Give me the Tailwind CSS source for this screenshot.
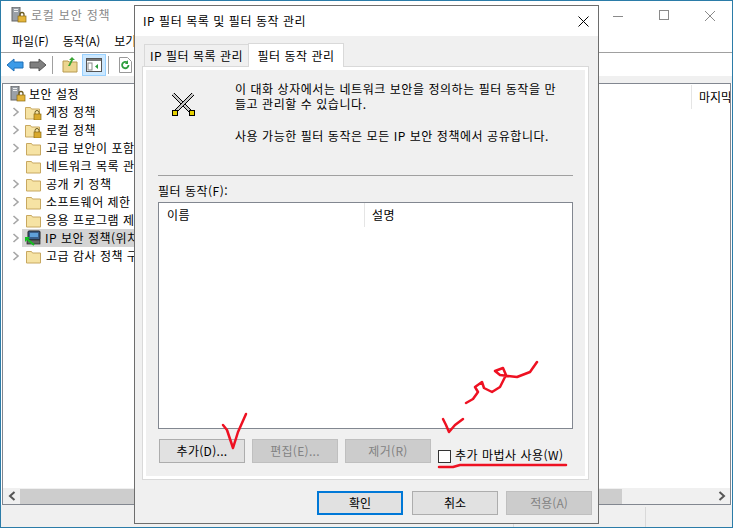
<!DOCTYPE html>
<html lang="ko">
<head>
<meta charset="UTF-8">
<title>로컬 보안 정책</title>
<script src="https://cdn.jsdelivr.net/npm/@tailwindcss/browser@4"></script>
</head>
<body class="bg-white">
<div class="relative w-[733px] h-[528px] overflow-hidden border border-[#2b7ca8] bg-white text-[12px] leading-[16px] text-black font-['Noto_Sans_CJK_KR','Noto_Sans',sans-serif] flex flex-col">

  <!-- main window -->
  <div class="h-[28px] flex items-center pl-[10px] shrink-0">
    <svg width="16" height="16" viewBox="0 0 16 16"><rect x="1" y="0" width="8" height="14" fill="#9aa0a8" stroke="#666"/><rect x="3" y="2" width="4" height="1" fill="#eee"/><rect x="3" y="4" width="4" height="1" fill="#eee"/><path d="M9 9V7.5a2 2 0 0 1 4 0V9" fill="none" stroke="#6b5a20" stroke-width="1.3"/><rect x="7" y="9" width="8" height="6" fill="#e5b53a" stroke="#8a6a14" stroke-width=".7"/></svg>
    <span class="ml-[4px] text-[#8a8a8a] tracking-[0.8px]">로컬 보안 정책</span>
  </div>
  <div class="h-[24px] flex items-center pl-[11px] gap-[14px] shrink-0 border-b border-[#a0a0a0]">
    <span>파일(F)</span><span>동작(A)</span><span>보기(V)</span>
  </div>
  <div class="h-[23px] flex items-center pl-[5px] shrink-0">
    <svg width="18" height="14" viewBox="0 0 18 14"><path d="M1 7 8 1v3h9v6H8v3z" fill="#3c9be8" stroke="#1c6fb8"/></svg>
    <svg class="ml-[5px]" width="18" height="14" viewBox="0 0 18 14"><path d="M17 7 10 1v3H1v6h9v3z" fill="#808080" stroke="#555"/></svg>
    <div class="w-px h-[18px] bg-[#a0a0a0] ml-[5px]"></div>
    <svg class="ml-[9px]" width="16" height="17" viewBox="0 0 16 17"><path d="M1 5h5l1 1h8v10H1z" fill="#ecd590" stroke="#b89a50"/><path d="M6 10 9 4H7l3-3 3 3h-2l-3 6z" fill="#3aa535"/></svg>
    <div class="ml-[4px] w-[24px] h-[22px] bg-[#cce8ff] border border-[#99d1ff] flex items-center justify-center">
      <svg width="16" height="14" viewBox="0 0 16 14"><rect x=".5" y=".5" width="15" height="13" fill="#fff" stroke="#555"/><rect x="1" y="1" width="14" height="2" fill="#777"/><rect x="2" y="5" width="4" height="7" fill="none" stroke="#888"/><path d="M12 6v5L9 8.500z" fill="#2a9a3a"/></svg>
    </div>
    <div class="w-px h-[18px] bg-[#a0a0a0] ml-[2px]"></div>
    <svg class="ml-[10px]" width="13" height="16" viewBox="0 0 13 16"><path d="M.5.500h8l4 4v11H.5z" fill="#fff" stroke="#999"/><path d="M9.500 8a3.200 3.200 0 1 1-1-2.300" fill="none" stroke="#2e9e3e" stroke-width="1.800"/><path d="M9 3v4H6z" fill="#2e9e3e"/></svg>
  </div>
  <div class="h-[7px] bg-[#f0f0f0] shrink-0"></div>

  <div class="flex-1 min-h-0 flex flex-col border-t border-l border-r border-[#828790] mx-px border-b-0">
    <div class="flex-1 min-h-0 flex">
      <div class="w-[688px] pt-[1px] shrink-0 overflow-hidden">
        <div class="h-[18px] flex items-center pl-[7px]">
          <svg width="16" height="16" viewBox="0 0 16 16"><rect x="1" y="0" width="8" height="14" fill="#9aa0a8" stroke="#666"/><rect x="3" y="2" width="4" height="1" fill="#eee"/><rect x="3" y="4" width="4" height="1" fill="#eee"/><path d="M9 9V7.500a2 2 0 0 1 4 0V9" fill="none" stroke="#6b5a20" stroke-width="1.300"/><rect x="7" y="9" width="8" height="6" fill="#e5b53a" stroke="#8a6a14" stroke-width=".7"/></svg>
          <span class="ml-[3px] tracking-[0.5px]">보안 설정</span>
        </div>
        <div class="h-[18px] flex items-center pl-[9px]">
          <svg width="8" height="10" viewBox="0 0 8 10"><path d="M1.500 1 6 5 1.500 9" fill="none" stroke="#a6a6a6" stroke-width="1.600"/></svg>
          <svg class="ml-[5px]" width="17" height="15" viewBox="0 0 17 15"><path d="M.5 2.500h5l1 1.500h8v10H.5z" fill="#f6e3a4" stroke="#c8a860"/><path d="M10 9V7.500a2 2 0 0 1 4 0V9" fill="none" stroke="#6b5a20"/><rect x="9" y="9" width="7" height="6" fill="#d9a92c" stroke="#8a6a14" stroke-width=".7"/></svg>
          <span class="ml-[4px] tracking-[0.5px]">계정 정책</span>
        </div>
        <div class="h-[18px] flex items-center pl-[9px]">
          <svg width="8" height="10" viewBox="0 0 8 10"><path d="M1.500 1 6 5 1.500 9" fill="none" stroke="#a6a6a6" stroke-width="1.600"/></svg>
          <svg class="ml-[5px]" width="17" height="15" viewBox="0 0 17 15"><path d="M.5 2.500h5l1 1.500h8v10H.5z" fill="#f6e3a4" stroke="#c8a860"/><path d="M10 9V7.500a2 2 0 0 1 4 0V9" fill="none" stroke="#6b5a20"/><rect x="9" y="9" width="7" height="6" fill="#d9a92c" stroke="#8a6a14" stroke-width=".7"/></svg>
          <span class="ml-[4px] tracking-[0.5px]">로컬 정책</span>
        </div>
        <div class="h-[18px] flex items-center pl-[9px]">
          <svg width="8" height="10" viewBox="0 0 8 10"><path d="M1.500 1 6 5 1.500 9" fill="none" stroke="#a6a6a6" stroke-width="1.600"/></svg>
          <svg class="ml-[5px]" width="17" height="15" viewBox="0 0 17 15"><path d="M1.500 2.500h5l1 1.500h8v10h-14z" fill="#f6e3a4" stroke="#c8a860"/></svg>
          <span class="ml-[4px] tracking-[0.5px] whitespace-nowrap">고급 보안이 포함된 Windows</span>
        </div>
        <div class="h-[18px] flex items-center pl-[22px]">
          <svg width="17" height="15" viewBox="0 0 17 15"><path d="M1.500 2.500h5l1 1.500h8v10h-14z" fill="#f6e3a4" stroke="#c8a860"/></svg>
          <span class="ml-[4px] tracking-[0.5px] whitespace-nowrap">네트워크 목록 관리자 정책</span>
        </div>
        <div class="h-[18px] flex items-center pl-[9px]">
          <svg width="8" height="10" viewBox="0 0 8 10"><path d="M1.500 1 6 5 1.500 9" fill="none" stroke="#a6a6a6" stroke-width="1.600"/></svg>
          <svg class="ml-[5px]" width="17" height="15" viewBox="0 0 17 15"><path d="M1.500 2.500h5l1 1.500h8v10h-14z" fill="#f6e3a4" stroke="#c8a860"/></svg>
          <span class="ml-[4px] tracking-[0.5px]">공개 키 정책</span>
        </div>
        <div class="h-[18px] flex items-center pl-[9px]">
          <svg width="8" height="10" viewBox="0 0 8 10"><path d="M1.500 1 6 5 1.500 9" fill="none" stroke="#a6a6a6" stroke-width="1.600"/></svg>
          <svg class="ml-[5px]" width="17" height="15" viewBox="0 0 17 15"><path d="M1.500 2.500h5l1 1.500h8v10h-14z" fill="#f6e3a4" stroke="#c8a860"/></svg>
          <span class="ml-[4px] tracking-[0.5px] whitespace-nowrap">소프트웨어 제한 정책</span>
        </div>
        <div class="h-[18px] flex items-center pl-[9px]">
          <svg width="8" height="10" viewBox="0 0 8 10"><path d="M1.500 1 6 5 1.500 9" fill="none" stroke="#a6a6a6" stroke-width="1.600"/></svg>
          <svg class="ml-[5px]" width="17" height="15" viewBox="0 0 17 15"><path d="M1.500 2.500h5l1 1.500h8v10h-14z" fill="#f6e3a4" stroke="#c8a860"/></svg>
          <span class="ml-[4px] tracking-[0.5px] whitespace-nowrap">응용 프로그램 제어 정책</span>
        </div>
        <div class="h-[18px] flex items-center pl-[9px]">
          <svg width="8" height="10" viewBox="0 0 8 10"><path d="M1.500 1 6 5 1.500 9" fill="none" stroke="#a6a6a6" stroke-width="1.600"/></svg>
          <div class="ml-[2px] w-[200px] h-[18px] bg-[#d4d4d4] flex items-center pl-[2px]">
            <svg width="17" height="16" viewBox="0 0 17 16"><rect x="4" y="1" width="12" height="9" rx="1" fill="#3a5f8a" stroke="#222"/><rect x="6" y="3" width="8" height="4" fill="#5fa0d8"/><rect x="3" y="10" width="13" height="4" fill="#666" stroke="#222" stroke-width=".7"/><path d="M2 8l8 7" stroke="#12c020" stroke-width="2"/><path d="M1 7v5l5-5z" fill="#12c020"/></svg>
            <span class="ml-[4px] tracking-[0.5px] whitespace-nowrap">IP 보안 정책(위치: 로컬 컴퓨터)</span>
          </div>
        </div>
        <div class="h-[18px] flex items-center pl-[9px]">
          <svg width="8" height="10" viewBox="0 0 8 10"><path d="M1.500 1 6 5 1.500 9" fill="none" stroke="#a6a6a6" stroke-width="1.600"/></svg>
          <svg class="ml-[5px]" width="17" height="15" viewBox="0 0 17 15"><path d="M1.500 2.500h5l1 1.500h8v10h-14z" fill="#f6e3a4" stroke="#c8a860"/></svg>
          <span class="ml-[4px] tracking-[0.5px] whitespace-nowrap">고급 감사 정책 구성</span>
        </div>
      </div>
      <div class="flex-1 min-w-0 h-[24px] mt-[1px] border-l border-[#e5e5e5] pl-[7px] flex items-center overflow-hidden whitespace-nowrap">마지막</div>
    </div>
    <!-- horizontal scrollbar -->
    <div class="h-[16px] shrink-0 bg-[#f0f0f0] flex items-center">
      <div class="w-[17px] flex justify-center"><svg width="8" height="10" viewBox="0 0 8 10"><path d="M6.500 1 2 5l4.500 4" fill="none" stroke="#555" stroke-width="2"/></svg></div>
      <div class="w-[602px] h-[15px] bg-[#cdcdcd]"></div>
      <div class="flex-1"></div>
      <div class="w-[17px] flex justify-center"><svg width="8" height="10" viewBox="0 0 8 10"><path d="M1.500 1 6 5 1.500 9" fill="none" stroke="#555" stroke-width="2"/></svg></div>
    </div>
    <div class="h-[1px] bg-[#828790] shrink-0"></div>
  </div>
  <!-- status bar -->
  <div class="h-[22px] shrink-0 bg-[#f0f0f0] flex justify-end">
    <div class="w-[132px] mt-[2px] border-l border-[#d9d9d9]"></div>
    <div class="w-[87px] mt-[2px] border-l border-[#d9d9d9]"></div>
  </div>

  <!-- dialog -->
  <div class="absolute left-[133px] top-[4px] w-[465px] h-[519px] border border-[#6d6d6d] bg-[#f0f0f0] flex flex-col">
    <div class="h-[30px] bg-white shrink-0 flex items-center justify-between pl-[8px] pr-[9px]">
      <span class="tracking-[0.55px] mt-[-1px]">IP 필터 목록 및 필터 동작 관리</span>
      <svg width="11" height="11" viewBox="0 0 11 11"><path d="M.5.500l10 10M10.500.500l-10 10" stroke="#000" stroke-width="1"/></svg>
    </div>
    <div class="flex items-end h-[30px] shrink-0 pl-[9px] relative z-10">
      <div class="w-[105px] h-[22px] border border-b-0 border-[#d9d9d9] flex items-center justify-center tracking-[0.5px] whitespace-nowrap mb-0">IP 필터 목록 관리</div>
      <div class="w-[96px] h-[24px] ml-[-1px] border border-b-0 border-[#d9d9d9] bg-white flex items-center justify-center tracking-[0.5px] whitespace-nowrap mb-[-1px]">필터 동작 관리</div>
    </div>
    <div class="w-[447px] h-[414px] ml-[7px] border border-[#d9d9d9] bg-[#f0f0f0] shadow-[inset_0_0_0_3px_#fff] px-[15px] flex flex-col">
      <div class="h-[108px] shrink-0 flex">
        <div class="w-[77px] pt-[25px] pl-[13px] shrink-0">
          <svg width="24" height="24" viewBox="0 0 24 24" shape-rendering="crispEdges"><path d="M2 2 21 21" stroke="#000" stroke-width="3.600"/><path d="M2 2 21 21" stroke="#c8c8c8" stroke-width="1.800"/><path d="M22 2 3 21" stroke="#000" stroke-width="3.600"/><path d="M22 2 3 21" stroke="#c8c8c8" stroke-width="1.800"/><rect x="1" y="18" width="5" height="5" fill="#e5d000" stroke="#000"/><rect x="18" y="18" width="5" height="5" fill="#e5d000" stroke="#000"/></svg>
        </div>
        <div class="pt-[14px] text-[12px] leading-[15px] tracking-[0.55px]">
          <p class="whitespace-nowrap">이 대화 상자에서는 네트워크 보안을 정의하는 필터 동작을 만</p>
          <p class="whitespace-nowrap">들고 관리할 수 있습니다.</p>
          <p class="whitespace-nowrap mt-[17px]">사용 가능한 필터 동작은 모든 IP 보안 정책에서 공유합니다.</p>
        </div>
      </div>
      <div class="h-px bg-[#a0a0a0] shrink-0"></div>
      <div class="h-[26px] shrink-0 flex items-center tracking-[0.5px] pt-[3px]">필터 동작(F):</div>
      <div class="h-[227px] shrink-0 border border-[#828790] bg-white">
        <div class="h-[24px] flex">
          <div class="w-[206px] border-r border-[#e5e5e5] pl-[8px] flex items-center tracking-[0.5px]">이름</div>
          <div class="pl-[7px] flex items-center tracking-[0.5px]">설명</div>
        </div>
      </div>
      <div class="mt-[9px] ml-[1px] flex items-center">
        <button class="w-[86px] h-[24px] bg-[#e1e1e1] border border-[#adadad] tracking-[0.3px]">추가(D)...</button>
        <button class="w-[86px] h-[24px] ml-[7px] bg-[#cccccc] border border-[#bfbfbf] text-[#838383] tracking-[0.3px]">편집(E)...</button>
        <button class="w-[86px] h-[24px] ml-[7px] bg-[#cccccc] border border-[#bfbfbf] text-[#838383] tracking-[0.3px]">제거(R)</button>
        <div class="ml-[7px] mt-[11px] w-[13px] h-[13px] bg-white border border-[#333]"></div>
        <span class="ml-[4px] mt-[9px] tracking-[0.5px] whitespace-nowrap">추가 마법사 사용(W)</span>
      </div>
    </div>
    <div class="flex-1 flex items-start pl-[182px] pt-[11px]">
      <button class="w-[86px] h-[24px] bg-[#e1e1e1] border-2 border-[#0078d7]">확인</button>
      <button class="w-[86px] h-[24px] ml-[9px] bg-[#e1e1e1] border border-[#adadad]">취소</button>
      <button class="w-[86px] h-[24px] ml-[8px] bg-[#cccccc] border border-[#bfbfbf] text-[#838383]">적용(A)</button>
    </div>
  </div>

  <!-- outer window caption buttons -->
  <svg class="absolute left-[610px] top-[8px]" width="112" height="16" viewBox="0 0 112 16"><path d="M2 7.500h10" stroke="#8a8a8a"/><rect x="48.500" y="1.500" width="9" height="9" fill="none" stroke="#8a8a8a"/><path d="M94 2l10 10M104 2 94 12" stroke="#8a8a8a"/></svg>

  <!-- red pen marks -->
  <svg class="absolute left-[-1px] top-[-1px] pointer-events-none" width="733" height="528" viewBox="0 0 733 528" fill="none" stroke="#ee1122" stroke-width="2.500" stroke-linecap="round" stroke-linejoin="round">
    <path d="M223 425 227 430 233 448 238 432 246 414"/>
    <path d="M443 419 446 425 449 432 455 425 463 419"/>
    <path d="M466 403 473 399 478 392 475 387 482 382 484 388 492 392 500 387 506 375 503 368 495 371 500 375 517 377 530 372 537 362"/>
    <path d="M439 467 453 467 460 465 503 465 566 465"/>
  </svg>
</div>
</body>
</html>
